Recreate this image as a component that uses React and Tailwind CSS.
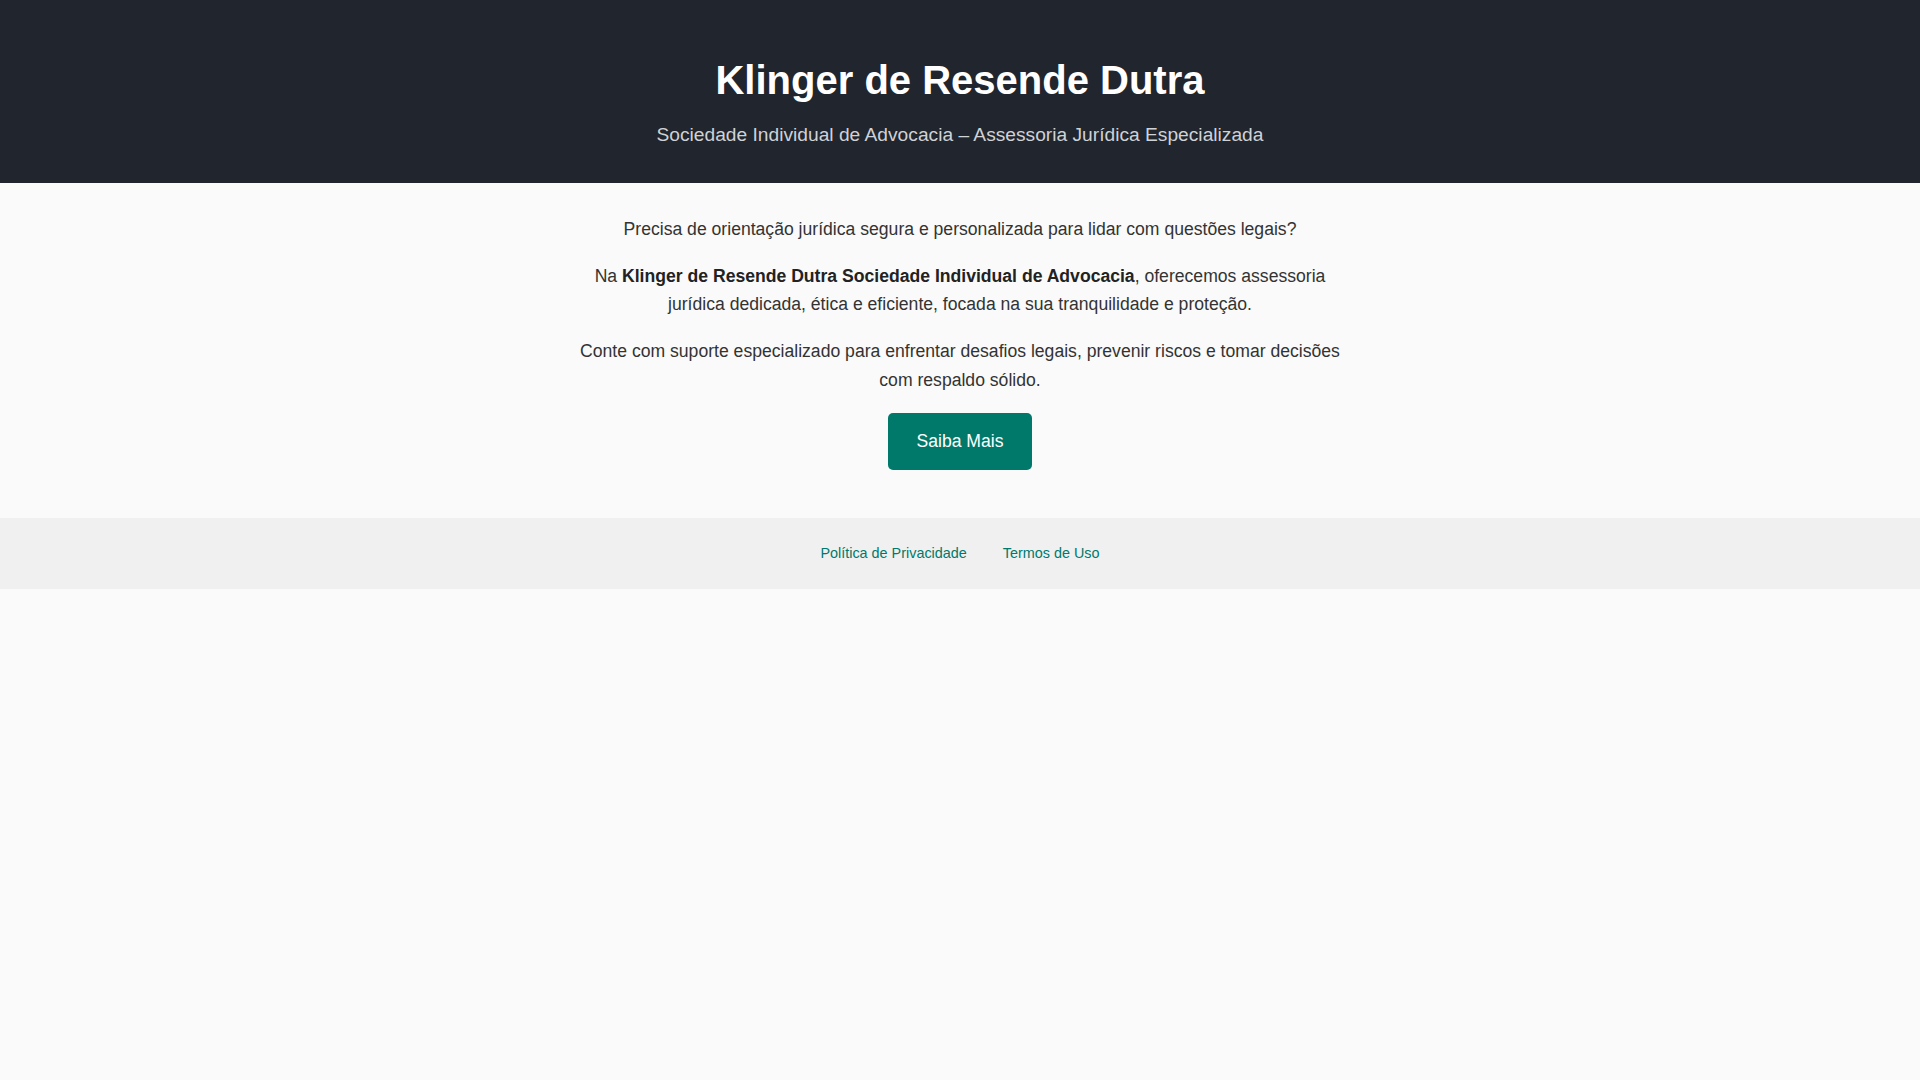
export default function App() {
  return (
    <div
      className="min-h-screen bg-[#fafafa] text-[#333]"
      style={{ fontFamily: '"Liberation Sans", Arial, sans-serif' }}
    >
      <header className="bg-[#21252d] pt-[56px] pb-[33px] text-center">
        <h1 className="text-[40px] leading-[48px] font-bold text-white">Klinger de Resende Dutra</h1>
        <p className="mt-[15px] text-[19.2px] leading-[31px] text-[#cfd2d6]">
          Sociedade Individual de Advocacia – Assessoria Jurídica Especializada
        </p>
      </header>

      <main className="pt-[32px] pb-[48px]">
        <div className="mx-auto flex max-w-[780px] flex-col items-center gap-[19px] text-center text-[17.6px] leading-[28.16px]">
          <p>Precisa de orientação jurídica segura e personalizada para lidar com questões legais?</p>
          <p>
            Na <strong className="font-bold text-[#222]">Klinger de Resende Dutra Sociedade Individual de Advocacia</strong>,
            oferecemos assessoria jurídica dedicada, ética e eficiente, focada na sua tranquilidade e proteção.
          </p>
          <p>
            Conte com suporte especializado para enfrentar desafios legais, prevenir riscos e tomar decisões com
            respaldo sólido.
          </p>
          <a
            href="#"
            className="block w-[144px] rounded-[5px] bg-[#00796b] py-[14px] text-center leading-[29px] text-white"
          >
            Saiba Mais
          </a>
        </div>
      </main>

      <footer className="bg-[#f0f0f0] py-6">
        <div className="flex justify-center gap-[36px] text-[14.4px] leading-[23px]">
          <a href="#" className="text-[#00796b]">Política de Privacidade</a>
          <a href="#" className="text-[#00796b]">Termos de Uso</a>
        </div>
      </footer>
    </div>
  );
}
